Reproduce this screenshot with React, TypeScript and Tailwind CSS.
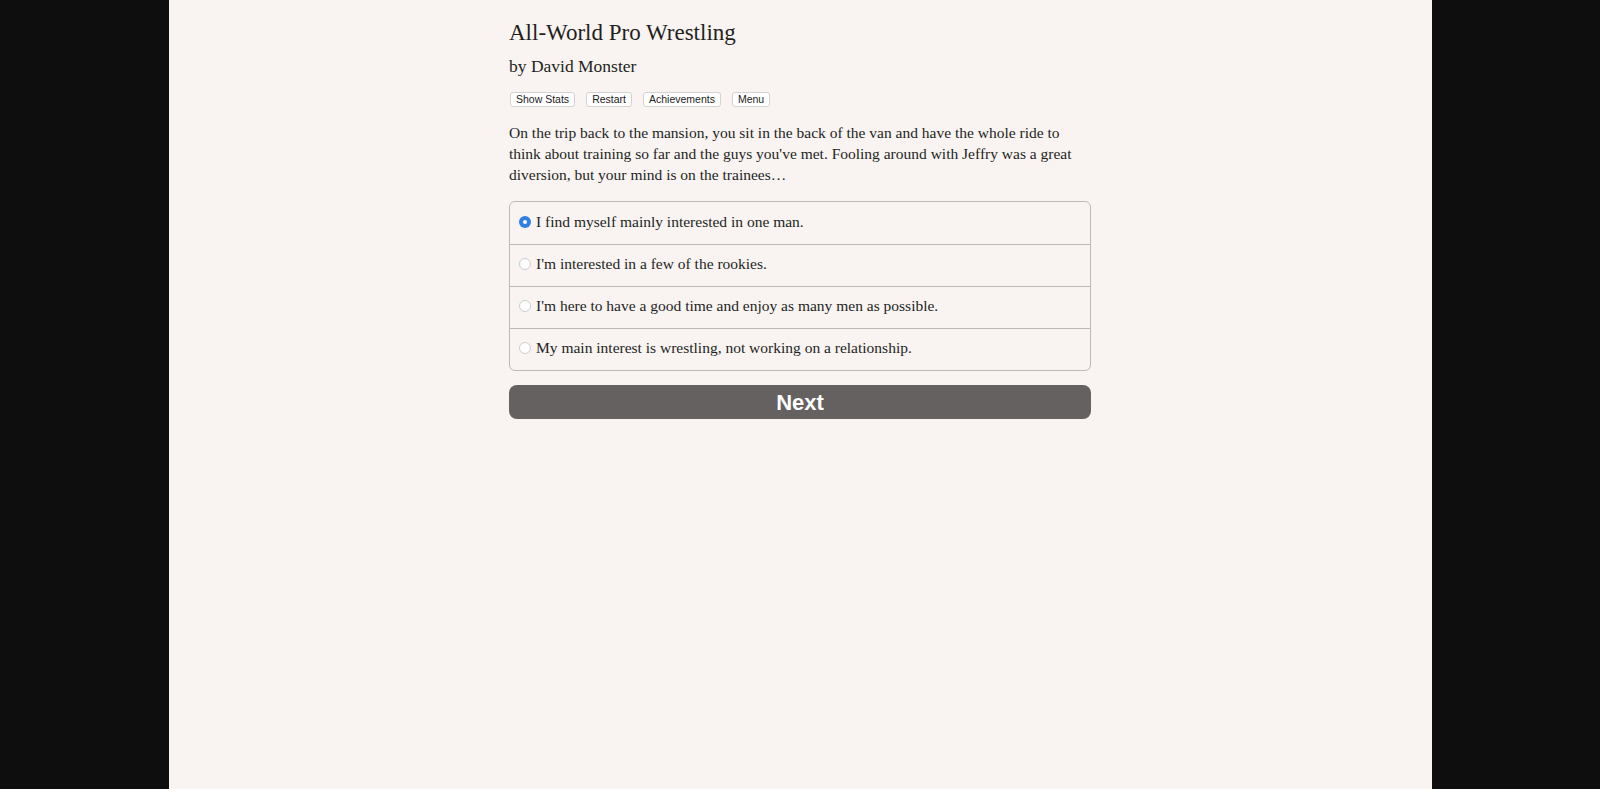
import { useState } from "react";

const choices = [
  "I find myself mainly interested in one man.",
  "I'm interested in a few of the rookies.",
  "I'm here to have a good time and enjoy as many men as possible.",
  "My main interest is wrestling, not working on a relationship.",
];

function TopButton({ label }: { label: string }) {
  return (
    <button className="h-[15px] px-[5px] bg-white border border-[#d6d2cf] rounded-[3px] text-[10.5px] leading-[13px] text-[#222] font-['Liberation_Sans',Arial,sans-serif]">
      {label}
    </button>
  );
}

function Radio({ checked }: { checked: boolean }) {
  if (checked) {
    return (
      <span className="w-[12px] h-[12px] rounded-full bg-[#2f7fe6] flex items-center justify-center shrink-0">
        <span className="w-[4px] h-[4px] rounded-full bg-white" />
      </span>
    );
  }
  return <span className="w-[12px] h-[12px] rounded-full bg-white border border-[#cfccca] shrink-0" />;
}

export default function App() {
  const [picked, setPicked] = useState(0);

  return (
    <div className="min-h-screen bg-[#0e0e0e] font-['Liberation_Serif','Times_New_Roman',serif]">
      <div className="mx-auto w-[1263px] min-h-screen bg-[#f9f4f1] text-[#231f1d]">
        <div className="mx-auto w-[582px] pt-[18px]">
          <h1 className="text-[23px] leading-[30px]">All-World Pro Wrestling</h1>
          <h2 className="mt-[6px] text-[17.5px] leading-[24px]">by David Monster</h2>

          <div className="mt-[14px] flex gap-[11px] pl-[1px]">
            <TopButton label="Show Stats" />
            <TopButton label="Restart" />
            <TopButton label="Achievements" />
            <TopButton label="Menu" />
          </div>

          <p className="mt-[15px] text-[15.5px] leading-[21px]">
            On the trip back to the mansion, you sit in the back of the van and have the whole ride to think about
            training so far and the guys you've met. Fooling around with Jeffry was a great diversion, but your mind
            is on the trainees…
          </p>

          <div className="mt-[16px] border border-[#bdb9b6] rounded-[6px] overflow-hidden">
            {choices.map((c, i) => (
              <label
                key={c}
                onClick={() => setPicked(i)}
                className="h-[42px] flex items-center gap-[5px] pl-[9px] pb-[3px] border-t border-[#bdb9b6] first:border-t-0 text-[15.5px] cursor-pointer"
              >
                <Radio checked={picked === i} />
                <span>{c}</span>
              </label>
            ))}
          </div>

          <button className="mt-[14px] w-full h-[34px] rounded-[8px] bg-[#656160] text-white text-[22px] font-bold font-['Liberation_Sans',Arial,sans-serif]">
            Next
          </button>
        </div>
      </div>
    </div>
  );
}
